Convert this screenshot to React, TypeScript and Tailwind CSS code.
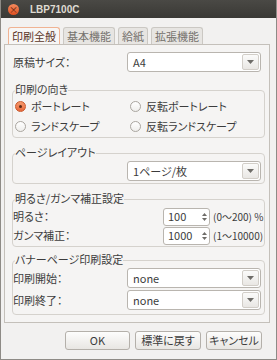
import React from 'react';

const textColor = 'text-[#3c3c3c]';

const Arrow = () => (
  <svg width="7" height="4" viewBox="0 0 7 4">
    <path d="M0 0h7L3.5 4z" fill="#6e6c68" />
  </svg>
);

function Combo({ value }: { value: string }) {
  return (
    <div className="flex h-[20px] w-[134px] rounded-[3px] border border-[#b9b5af] bg-white">
      <div className={`flex flex-1 items-center pl-[5px] text-[11px] ${textColor}`}>{value}</div>
      <div className="m-[1px] flex w-[17px] items-center justify-center rounded-[2px] border border-[#d2cec8] bg-gradient-to-b from-[#fbfbfa] to-[#e9e7e4]">
        <Arrow />
      </div>
    </div>
  );
}

function Spin({ value }: { value: string }) {
  return (
    <div className="flex h-[18px] w-[47px] rounded-[3px] border border-[#b9b5af] bg-white">
      <div className={`flex flex-1 items-center pl-[4px] text-[11px] ${textColor}`}>{value}</div>
      <div className="flex w-[8px] flex-col items-center justify-center gap-[2px] pr-[2px]">
        <svg width="5" height="3" viewBox="0 0 5 3"><path d="M0 3h5L2.5 0z" fill="#6e6c68" /></svg>
        <svg width="5" height="3" viewBox="0 0 5 3"><path d="M0 0h5L2.5 3z" fill="#6e6c68" /></svg>
      </div>
    </div>
  );
}

function Radio({ label, checked }: { label: string; checked?: boolean }) {
  return (
    <div className="flex h-[16px] items-center gap-[5px]">
      {checked ? (
        <span className="flex h-[11px] w-[11px] items-center justify-center rounded-full border border-[#c9582c] bg-gradient-to-b from-[#f59a6e] to-[#e8683a]">
          <span className="h-[3px] w-[3px] rounded-full bg-[#5a2a16]" />
        </span>
      ) : (
        <span className="h-[11px] w-[11px] rounded-full border border-[#aaa6a0] bg-gradient-to-b from-white to-[#efeeec]" />
      )}
      <span className={`text-[11px] ${textColor}`}>{label}</span>
    </div>
  );
}

function Frame({ title, children, className = '' }: { title: string; children: React.ReactNode; className?: string }) {
  return (
    <fieldset className={`rounded-[4px] border border-[#d5d2cd] px-0 ${className}`}>
      <legend className={`ml-[2px] pb-[3px] text-[11px] leading-[12px] ${textColor}`}>{title}</legend>
      {children}
    </fieldset>
  );
}

function Button({ label, w }: { label: string; w: string }) {
  return (
    <div className={`flex h-[19px] ${w} items-center justify-center rounded-[3px] border border-[#b4b0aa] bg-gradient-to-b from-[#fdfdfc] to-[#e8e6e3] text-[11px] ${textColor}`}>
      {label}
    </div>
  );
}

export default function App() {
  const tabs = ['印刷全般', '基本機能', '給紙', '拡張機能'];
  return (
    <div className="flex h-[360px] w-[277px] flex-col border-x border-b border-[#8e8b86] bg-[#f2f1f0] font-['Noto_Sans_CJK_JP',sans-serif] [font-feature-settings:'palt']">
      <div className="flex h-[18px] items-center bg-gradient-to-b from-[#4a4945] to-[#3a3935] pl-[7px]">
        <span className="flex h-[11px] w-[11px] items-center justify-center rounded-full bg-gradient-to-b from-[#f58a5c] to-[#df4f1f] text-[9px] leading-none text-[#5a2210]">×</span>
        <span className="ml-[11px] font-['Liberation_Sans',sans-serif] text-[10px] font-bold text-[#dfdbd2]">LBP7100C</span>
      </div>

      <div className="mt-[9px] flex gap-[3px] pl-[7px]">
        {tabs.map((t, i) => (
          <div
            key={t}
            className={`flex h-[17px] items-center rounded-t-[3px] border border-b-0 px-[3px] text-[11px] ${
              i === 0 ? 'border-[#f0b393] bg-[#f7f6f5] text-[#5a3426]' : 'border-[#cbc8c3] bg-[#e7e5e2] text-[#75726d]'
            }`}
          >
            {t}
          </div>
        ))}
      </div>

      <div className="ml-[3px] mr-[6px] flex h-[279px] flex-col border border-[#c4c0ba] bg-[#f5f4f3] pl-[7px] pr-[4px] pt-[7px]">
        <div className="flex items-center">
          <span className={`w-[115px] pl-[1px] text-[11px] ${textColor}`}>原稿サイズ：</span>
          <Combo value="A4" />
        </div>

        <Frame title="印刷の向き" className="mt-[11px] pb-[3px]">
          <div className="flex flex-col gap-[4px] pl-[2px]">
            <div className="flex">
              <div className="w-[115px]"><Radio label="ポートレート" checked /></div>
              <Radio label="反転ポートレート" />
            </div>
            <div className="flex">
              <div className="w-[115px]"><Radio label="ランドスケープ" /></div>
              <Radio label="反転ランドスケープ" />
            </div>
          </div>
        </Frame>

        <Frame title="ページレイアウト" className="mt-[8px] pb-[2px]">
          <div className="flex pl-[114px]">
            <Combo value="1ページ/枚" />
          </div>
        </Frame>

        <Frame title="明るさ/ガンマ補正設定" className="mt-[8px] pb-[1px]">
          <div className="flex h-[19px] items-center">
            <span className={`w-[150px] text-[11px] ${textColor}`}>明るさ：</span>
            <Spin value="100" />
            <span className={`ml-[3px] text-[10px] ${textColor}`}>(0～200) %</span>
          </div>
          <div className="flex h-[19px] items-center">
            <span className={`w-[150px] text-[11px] ${textColor}`}>ガンマ補正：</span>
            <Spin value="1000" />
            <span className={`ml-[3px] text-[10px] ${textColor}`}>(1～10000)</span>
          </div>
        </Frame>

        <Frame title="バナーページ印刷設定" className="mt-[6px] pb-[4px]">
          <div className="flex flex-col gap-[2px]">
            <div className="flex items-center">
              <span className={`w-[114px] text-[11px] ${textColor}`}>印刷開始：</span>
              <Combo value="none" />
            </div>
            <div className="flex items-center">
              <span className={`w-[114px] text-[11px] ${textColor}`}>印刷終了：</span>
              <Combo value="none" />
            </div>
          </div>
        </Frame>
      </div>

      <div className="mt-[8px] flex justify-end gap-[5px] pr-[14px]">
        <Button label="OK" w="w-[65px]" />
        <Button label="標準に戻す" w="w-[66px]" />
        <Button label="キャンセル" w="w-[56px]" />
      </div>
    </div>
  );
}
